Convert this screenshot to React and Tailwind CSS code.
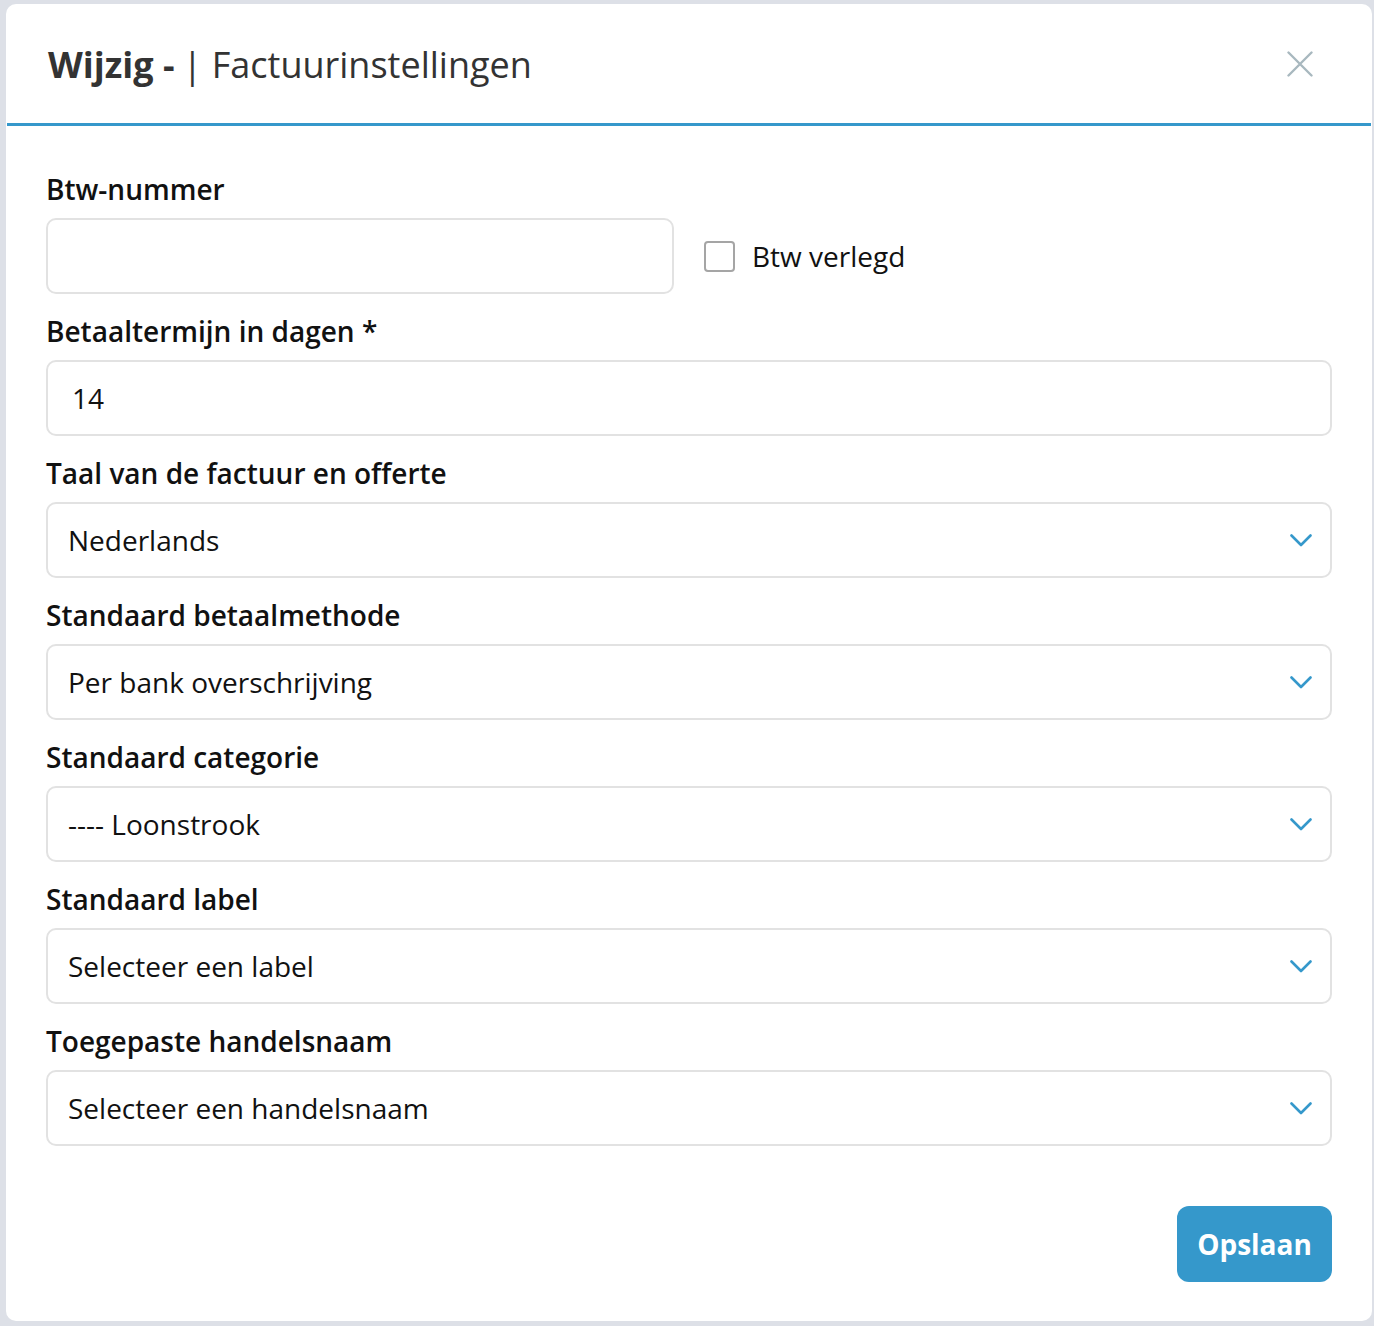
import React from "react";

const Chevron = () => (
  <svg width="22" height="13" viewBox="0 0 22 13" fill="none" className="shrink-0">
    <path d="M1.5 1.5 L11 11 L20.5 1.5" stroke="#3598cb" strokeWidth="2.6" strokeLinecap="round" strokeLinejoin="round" />
  </svg>
);

const Label = ({ children }) => (
  <div className="h-[30px] leading-[30px] text-[28px] font-semibold text-[#111] mb-[14px] whitespace-nowrap">{children}</div>
);

const Select = ({ value }) => (
  <div className="h-[76px] border-2 border-[#e2e2e2] rounded-[10px] flex items-center justify-between pl-[20px] pr-[18px] text-[28px] text-[#111]">
    <span>{value}</span>
    <Chevron />
  </div>
);

export default function App() {
  const selects = [
    ["Taal van de factuur en offerte", "Nederlands"],
    ["Standaard betaalmethode", "Per bank overschrijving"],
    ["Standaard categorie", "---- Loonstrook"],
    ["Standaard label", "Selecteer een label"],
    ["Toegepaste handelsnaam", "Selecteer een handelsnaam"],
  ];
  return (
    <div className="w-[1374px] h-[1326px] bg-[#dde0e7] pl-[6px] pt-[4px] pr-[2px] pb-[5px]" style={{ fontFamily: '"Open Sans", sans-serif' }}>
      <div className="bg-white rounded-[10px] h-full flex flex-col">
        <div className="h-[122px] shrink-0 pl-[41px] pr-[58px] flex items-center justify-between border-b-[3px] border-[#3598cb] mx-[1px]">
          <div className="text-[36px] text-[#333] whitespace-nowrap pt-[2px]">
            <span className="font-bold">Wijzig -</span>
            <span className="ml-[8px]">| Factuurinstellingen</span>
          </div>
          <svg width="26" height="26" viewBox="0 0 26 26" fill="none">
            <path d="M1.5 1.5 L24.5 24.5 M24.5 1.5 L1.5 24.5" stroke="#a8b8bf" strokeWidth="2.4" strokeLinecap="round" />
          </svg>
        </div>
        <div className="px-[40px] pt-[48px] flex flex-col">
          <Label>Btw-nummer</Label>
          <div className="flex items-center mb-[22px]">
            <div className="w-[628px] h-[76px] border-2 border-[#e2e2e2] rounded-[10px]" />
            <div className="ml-[30px] w-[31px] h-[31px] border-2 border-[#a5a5a5] rounded-[4px]" />
            <span className="ml-[17px] text-[28px] text-[#111]">Btw verlegd</span>
          </div>
          <Label>Betaaltermijn in dagen *</Label>
          <div className="h-[76px] border-2 border-[#e2e2e2] rounded-[10px] flex items-center pl-[24px] text-[28px] text-[#111] mb-[22px]">14</div>
          {selects.map(([l, v]) => (
            <div key={l} className="mb-[22px]">
              <Label>{l}</Label>
              <Select value={v} />
            </div>
          ))}
          <div className="flex justify-end mt-[38px]">
            <button className="w-[155px] h-[76px] rounded-[12px] bg-[#3598cb] text-white font-bold text-[28px]">Opslaan</button>
          </div>
        </div>
      </div>
    </div>
  );
}
